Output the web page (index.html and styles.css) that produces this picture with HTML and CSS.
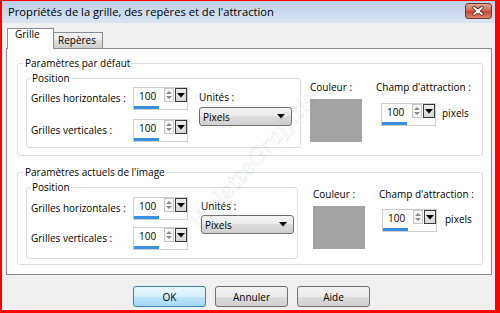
FILE: index.html
```html
<!DOCTYPE html>
<html lang="fr">
<head>
<meta charset="utf-8">
<title>Propriétés de la grille</title>
<link rel="stylesheet" href="styles.css">
</head>
<body>
<div class="window">
  <div class="titlebar">
    <span class="title">Propriétés de la grille, des repères et de l'attraction</span>
    <div class="close">
      <svg width="27" height="16" viewBox="0 0 27 16">
        <path d="M9.5 4.5 L17.5 11 M17.5 4.5 L9.5 11" stroke="#4a1e16" stroke-width="3.6" stroke-linecap="round"/>
        <path d="M9.5 4.5 L17.5 11 M17.5 4.5 L9.5 11" stroke="#fff" stroke-width="2" stroke-linecap="round"/>
      </svg>
    </div>
  </div>
  <div class="content">
    <div class="tabs">
      <div class="tab active">Grille</div>
      <div class="tab">Repères</div>
    </div>
    <div class="panel">
      <fieldset class="group g1">
        <legend>Paramètres par défaut</legend>
        <div class="group-body">
          <fieldset class="pos">
            <legend>Position</legend>
            <div class="pos-body">
              <div class="rows">
                <div class="row">
                  <span class="lbl">Grilles horizontales :</span>
                  <div class="spin">
                    <div class="spin-main">
                      <span class="spin-val">100</span>
                      <span class="spin-arrows"><svg width="8" height="12" viewBox="0 0 8 12"><path d="M4 2 L7 5 L1 5 Z M1 7 L7 7 L4 10 Z" fill="#8a8a8a"/></svg></span>
                      <span class="spin-drop"><svg width="8" height="5" viewBox="0 0 8 5"><path d="M0 0 L8 0 L4 4.5 Z" fill="#000"/></svg></span>
                    </div>
                    <div class="spin-bar"></div>
                  </div>
                </div>
                <div class="row">
                  <span class="lbl">Grilles verticales :</span>
                  <div class="spin">
                    <div class="spin-main">
                      <span class="spin-val">100</span>
                      <span class="spin-arrows"><svg width="8" height="12" viewBox="0 0 8 12"><path d="M4 2 L7 5 L1 5 Z M1 7 L7 7 L4 10 Z" fill="#8a8a8a"/></svg></span>
                      <span class="spin-drop"><svg width="8" height="5" viewBox="0 0 8 5"><path d="M0 0 L8 0 L4 4.5 Z" fill="#000"/></svg></span>
                    </div>
                    <div class="spin-bar"></div>
                  </div>
                </div>
              </div>
              <div class="units">
                <span class="units-lbl">Unités :</span>
                <div class="select"><span>Pixels</span><svg width="8" height="5" viewBox="0 0 8 5"><path d="M0 0 L8 0 L4 4.5 Z" fill="#000"/></svg></div>
              </div>
            </div>
          </fieldset>
          <div class="color-col">
            <span class="col-lbl">Couleur :</span>
            <div class="swatch"></div>
          </div>
          <div class="snap-col">
            <span class="col-lbl">Champ d'attraction :</span>
            <div class="snap-row">
              <div class="spin">
                <div class="spin-main">
                  <span class="spin-val">100</span>
                  <span class="spin-arrows"><svg width="8" height="12" viewBox="0 0 8 12"><path d="M4 2 L7 5 L1 5 Z M1 7 L7 7 L4 10 Z" fill="#8a8a8a"/></svg></span>
                  <span class="spin-drop"><svg width="8" height="5" viewBox="0 0 8 5"><path d="M0 0 L8 0 L4 4.5 Z" fill="#000"/></svg></span>
                </div>
                <div class="spin-bar"></div>
              </div>
              <span class="unit-txt">pixels</span>
            </div>
          </div>
        </div>
      </fieldset>

      <fieldset class="group g2">
        <legend>Paramètres actuels de l'image</legend>
        <div class="group-body">
          <fieldset class="pos">
            <legend>Position</legend>
            <div class="pos-body">
              <div class="rows">
                <div class="row">
                  <span class="lbl">Grilles horizontales :</span>
                  <div class="spin">
                    <div class="spin-main">
                      <span class="spin-val">100</span>
                      <span class="spin-arrows"><svg width="8" height="12" viewBox="0 0 8 12"><path d="M4 2 L7 5 L1 5 Z M1 7 L7 7 L4 10 Z" fill="#8a8a8a"/></svg></span>
                      <span class="spin-drop"><svg width="8" height="5" viewBox="0 0 8 5"><path d="M0 0 L8 0 L4 4.5 Z" fill="#000"/></svg></span>
                    </div>
                    <div class="spin-bar"></div>
                  </div>
                </div>
                <div class="row">
                  <span class="lbl">Grilles verticales :</span>
                  <div class="spin">
                    <div class="spin-main">
                      <span class="spin-val">100</span>
                      <span class="spin-arrows"><svg width="8" height="12" viewBox="0 0 8 12"><path d="M4 2 L7 5 L1 5 Z M1 7 L7 7 L4 10 Z" fill="#8a8a8a"/></svg></span>
                      <span class="spin-drop"><svg width="8" height="5" viewBox="0 0 8 5"><path d="M0 0 L8 0 L4 4.5 Z" fill="#000"/></svg></span>
                    </div>
                    <div class="spin-bar"></div>
                  </div>
                </div>
              </div>
              <div class="units">
                <span class="units-lbl">Unités :</span>
                <div class="select"><span>Pixels</span><svg width="8" height="5" viewBox="0 0 8 5"><path d="M0 0 L8 0 L4 4.5 Z" fill="#000"/></svg></div>
              </div>
            </div>
          </fieldset>
          <div class="color-col">
            <span class="col-lbl">Couleur :</span>
            <div class="swatch"></div>
          </div>
          <div class="snap-col">
            <span class="col-lbl">Champ d'attraction :</span>
            <div class="snap-row">
              <div class="spin">
                <div class="spin-main">
                  <span class="spin-val">100</span>
                  <span class="spin-arrows"><svg width="8" height="12" viewBox="0 0 8 12"><path d="M4 2 L7 5 L1 5 Z M1 7 L7 7 L4 10 Z" fill="#8a8a8a"/></svg></span>
                  <span class="spin-drop"><svg width="8" height="5" viewBox="0 0 8 5"><path d="M0 0 L8 0 L4 4.5 Z" fill="#000"/></svg></span>
                </div>
                <div class="spin-bar"></div>
              </div>
              <span class="unit-txt">pixels</span>
            </div>
          </div>
        </div>
      </fieldset>
      <span class="watermark">VioletteGraffitis</span>
    </div>
    <div class="buttons">
      <div class="btn default">OK</div>
      <div class="btn">Annuler</div>
      <div class="btn">Aide</div>
    </div>
  </div>
</div>
</body>
</html>
```

FILE: styles.css
```css
* { box-sizing: border-box; }

body {
  margin: 0;
  font-family: "Open Sans", "Noto Sans", sans-serif;
  font-size: 10px;
  color: #000;
}

.window {
  width: 500px;
  height: 313px;
  border-style: solid;
  border-color: #f00;
  border-width: 1px 5px 3px 2px;
  background: #f0f0f0;
  display: flex;
  flex-direction: column;
}

.titlebar {
  height: 22px;
  flex: none;
  display: flex;
  align-items: center;
  padding: 0 3px 0 6px;
  background: linear-gradient(#bccfe6, #cddcee 60%, #dbe5f1);
}

.title {
  flex: 1;
  font-size: 11.2px;
  line-height: 14px;
  white-space: nowrap;
}

.close {
  align-self: flex-start;
  margin-top: 2px;
  width: 27px;
  height: 16px;
  border: 1px solid #6b3b33;
  border-radius: 3px;
  background: linear-gradient(#e3a292, #cf6e55 45%, #c24c30 55%, #d9876c);
  display: flex;
}

.close svg { margin: -1px 0 0 -1px; }

.content {
  flex: 1;
  display: flex;
  flex-direction: column;
  padding: 5px 3px 0 4px;
}

.tabs {
  height: 21px;
  margin-bottom: -1px;
  display: flex;
  align-items: flex-end;
  padding-left: 1px;
  position: relative;
  z-index: 1;
}

.tab {
  height: 16px;
  margin-bottom: 1px;
  padding: 0 6px 0 4px;
  border: 1px solid #898c95;
  border-bottom: none;
  background: linear-gradient(#f3f3f3, #ebebeb 50%, #dddddd 50%, #cfcfcf);
  line-height: 15px;
}

.tab.active {
  height: 21px;
  margin-bottom: 0;
  width: 47px;
  padding: 0 0 0 7px;
  background: #fff;
  margin-right: -1px;
  line-height: 11px;
  padding-top: 0;
}

.panel {
  position: relative;
  height: 227px;
  flex: none;
  background: #fff;
  border: 1px solid #898c95;
  padding: 7px 8px 0 10px;
  overflow: hidden;
}

.group {
  margin: 0;
  height: 100px;
  border: 1px solid #d5dfe5;
  border-radius: 3px;
  padding: 0 0 0 8px;
}

.group > legend {
  padding: 0 2px;
  margin-left: -3px;
  line-height: 14px;
}

.g2 { margin-top: 9px; }

.group-body {
  display: flex;
  align-items: flex-start;
}

.pos {
  margin: 1px 0 0 0;
  width: 275px;
  height: 77px;
  border: 1px solid #d5dfe5;
  border-radius: 3px;
  padding: 0 0 0 4px;
}

.g2 .pos { width: 272px; height: 79px; }

.pos > legend {
  padding: 0 1px;
  margin-left: 0;
  line-height: 14px;
}

.pos-body {
  display: flex;
  align-items: flex-start;
  padding-top: 2px;
}

.g2 .pos-body { padding-top: 3px; }

.rows {
  display: flex;
  flex-direction: column;
  gap: 9px;
}

.g2 .rows { gap: 7px; }

.row {
  display: grid;
  grid-template-columns: 102px 55px;
  align-items: start;
}

.lbl { line-height: 22px; }

.spin {
  width: 55px;
  height: 23px;
  border: 1px solid #cfcfcf;
  background: #fff;
  display: flex;
  flex-direction: column;
}

.spin-main {
  display: flex;
  height: 14px;
}

.spin-val {
  flex: 1;
  padding-left: 5px;
  line-height: 16px;
}

.spin-arrows {
  width: 10px;
  border: 1px solid #c6c6c6;
  background: #f6f6f6;
  display: flex;
  align-items: center;
  justify-content: center;
}

.spin-drop {
  width: 12px;
  margin-left: 1px;
  border: 1px solid #3a3a3a;
  background: linear-gradient(#ececec, #d6d6d6);
  display: flex;
  align-items: center;
  justify-content: center;
}

.spin-bar {
  width: 25px;
  height: 3px;
  margin-top: 4px;
  background: #3a8edb;
}

.units {
  margin: 3px 0 0 11px;
  display: flex;
  flex-direction: column;
}

.g2 .units { margin-left: 13px; margin-top: 2px; }

.units-lbl {
  line-height: 14px;
  margin-bottom: 3px;
}

.g2 .units-lbl { margin-bottom: 2px; }

.select {
  width: 93px;
  height: 19px;
  border: 1px solid #707070;
  border-radius: 3px;
  background: linear-gradient(#f3f3f3, #ebebeb 50%, #dddddd 50%, #cfcfcf);
  display: flex;
  align-items: center;
  justify-content: space-between;
  padding: 0 6px 0 3px;
}

.color-col {
  margin: 10px 0 0 9px;
  width: 52px;
  display: flex;
  flex-direction: column;
}

.g2 .color-col { margin: 8px 0 0 15px; }

.col-lbl {
  line-height: 14px;
  white-space: nowrap;
}

.swatch {
  margin-top: 5px;
  width: 52px;
  height: 43px;
  background: #a3a3a3;
}

.snap-col {
  margin: 10px 0 0 14px;
  display: flex;
  flex-direction: column;
}

.g2 .snap-col { margin: 8px 0 0 14px; }

.snap-row {
  margin: 9px 0 0 5px;
  display: flex;
  align-items: center;
  gap: 6px;
}

.g2 .snap-row { margin: 8px 0 0 3px; gap: 8px; }

.unit-txt { padding-bottom: 3px; }

.watermark {
  position: absolute;
  left: 246px;
  top: 112px;
  transform: translate(-50%, -50%) rotate(-48deg);
  font-family: "DejaVu Serif", serif;
  font-style: italic;
  font-size: 22px;
  color: transparent;
  -webkit-text-stroke: 0.5px rgba(160, 160, 160, 0.3);
  white-space: nowrap;
  pointer-events: none;
}

.buttons {
  margin-top: 11px;
  display: flex;
  justify-content: center;
  gap: 9px;
  padding-left: 5px;
}

.btn {
  width: 73px;
  height: 21px;
  border: 1px solid #707070;
  border-radius: 3px;
  background: linear-gradient(#f2f2f2, #ebebeb 50%, #dddddd 50%, #cfcfcf);
  display: flex;
  align-items: center;
  justify-content: center;
}

.btn.default {
  border-color: #3c7fb1;
  background: linear-gradient(#eaf6fd, #d9f0fc 50%, #bee6fd 50%, #a7d9f5);
}
```
